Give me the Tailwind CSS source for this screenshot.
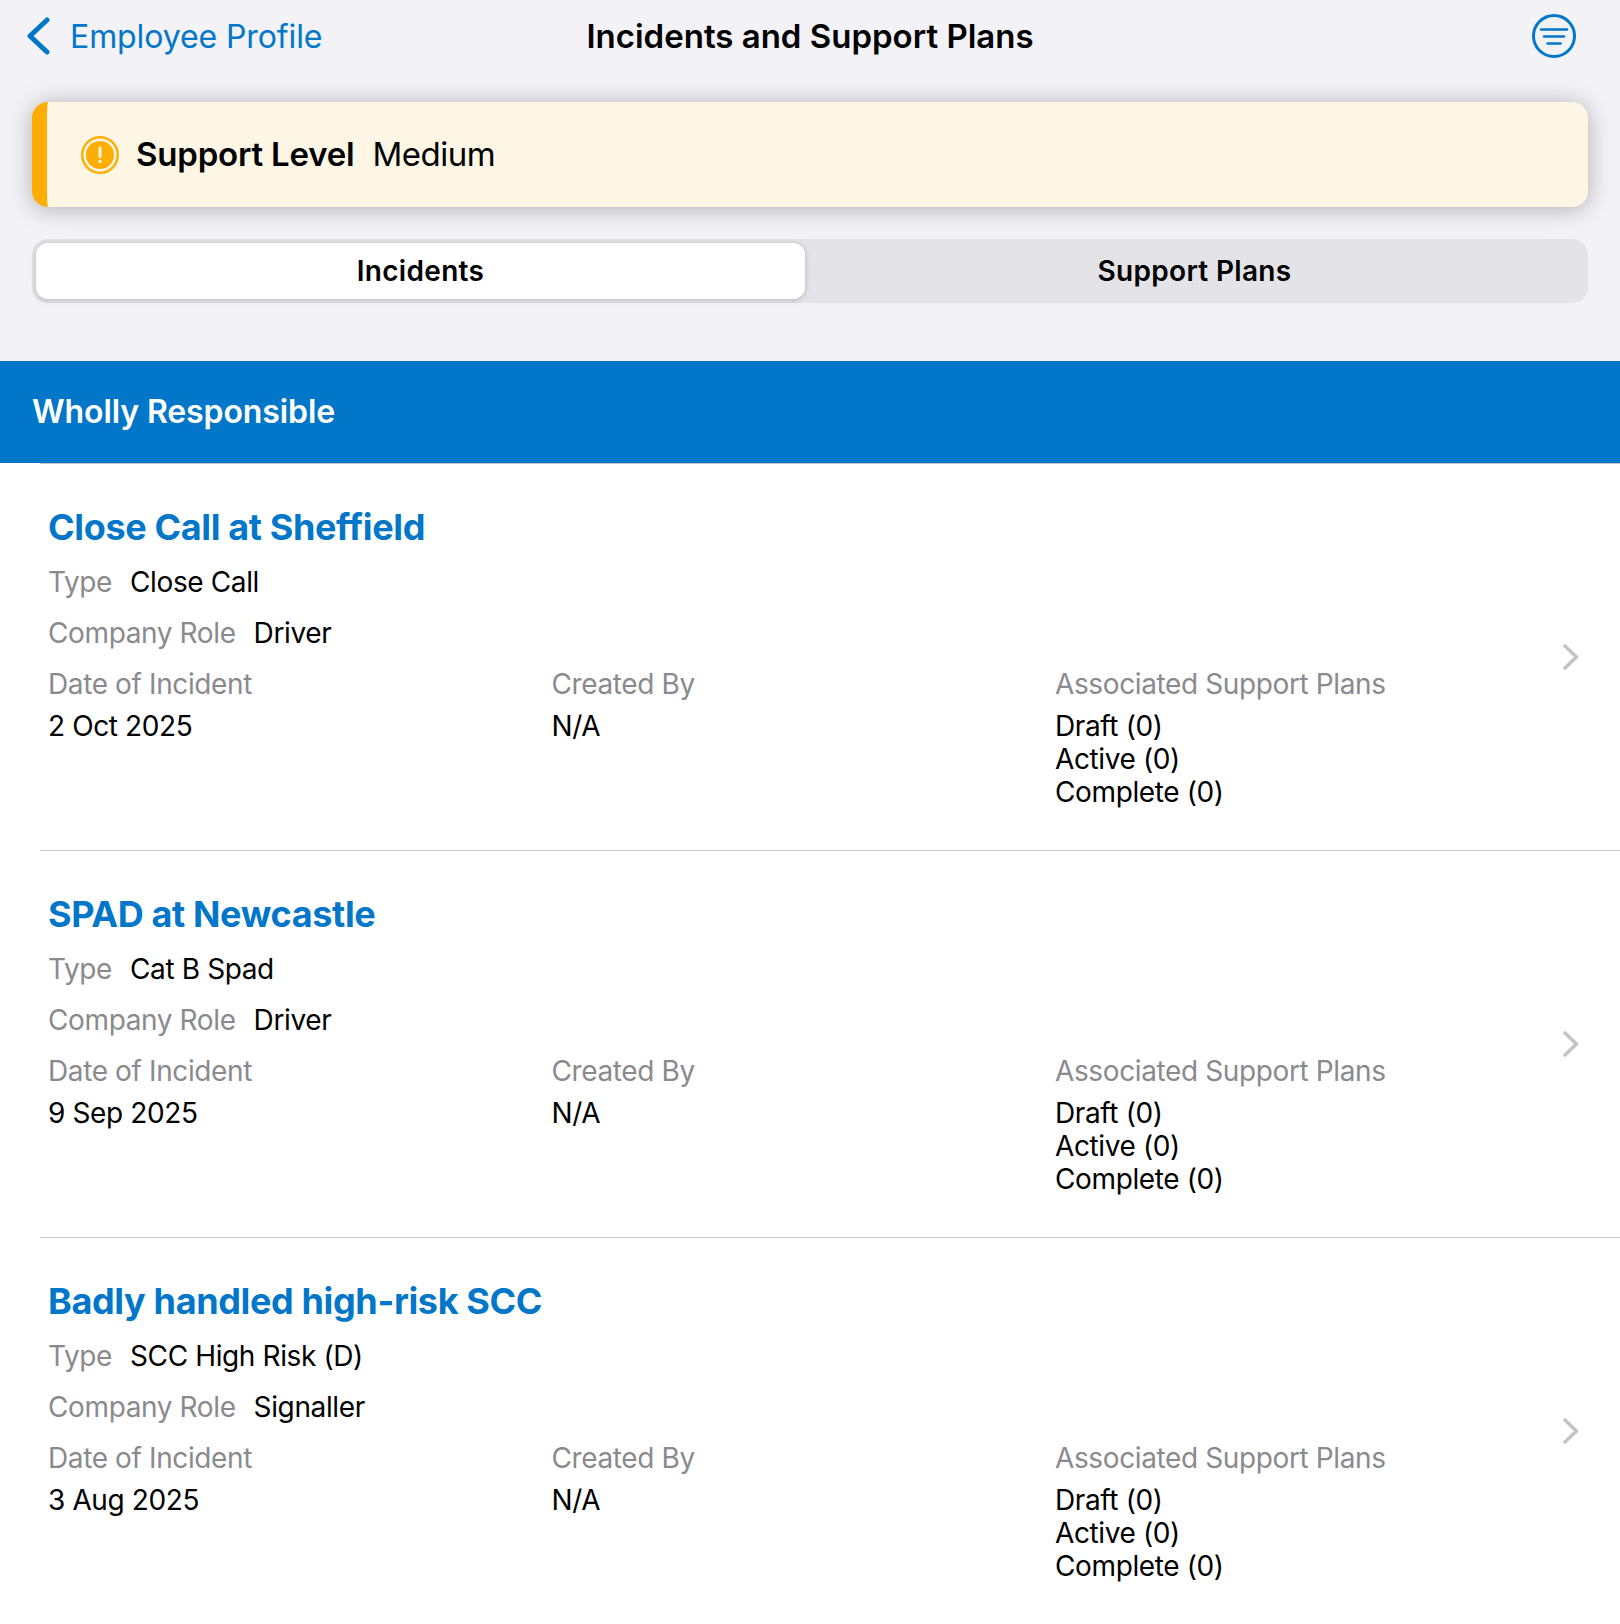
<!DOCTYPE html>
<html>
<head>
<meta charset="utf-8">
<title>Incidents and Support Plans</title>
<script src="https://cdn.jsdelivr.net/npm/@tailwindcss/browser@4"></script>
</head>
<body>
<div class="w-[1620px] h-[1624px] overflow-hidden bg-white flex flex-col font-['Inter',sans-serif] text-black">
  <div class="bg-[#f2f2f7] h-[361px] flex flex-col shrink-0">
    <!-- nav bar -->
    <div class="relative h-[72px] flex items-center justify-between pl-[26px] pr-[44px] shrink-0">
      <div class="flex items-center gap-[20px] text-[#0277c9] text-[32px] tracking-[-0.1px]">
        <svg width="24" height="38" viewBox="0 0 24 38" fill="none"><path d="M21 3 L4 19 L21 35" stroke="#0277c9" stroke-width="5" stroke-linecap="round" stroke-linejoin="round"/></svg>
        <span class="mt-[2px]">Employee Profile</span>
      </div>
      <div class="absolute inset-x-0 mt-[2px] text-center text-[33px] font-semibold pointer-events-none">Incidents and Support Plans</div>
      <svg width="44" height="44" viewBox="0 0 44 44" fill="none" stroke="#0277c9" stroke-linecap="round">
        <circle cx="22" cy="22" r="20.5" stroke-width="3"/>
        <path d="M9 15.5 H35" stroke-width="2.5"/>
        <path d="M12 22.5 H32" stroke-width="2.5"/>
        <path d="M15.5 29.5 H28.5" stroke-width="2.5"/>
      </svg>
    </div>
    <!-- support level -->
    <div class="mt-[30px] mx-[32px] h-[105px] rounded-[16px] overflow-hidden bg-[#fef6e5] border-l-[15px] border-[#ffad00] flex items-center pl-[34px] gap-[17px] shadow-[0_2px_24px_rgba(0,0,0,0.28)] shrink-0">
      <svg width="38" height="38" viewBox="0 0 38 38" fill="none">
        <circle cx="19" cy="19" r="17.8" stroke="#ffad00" stroke-width="2.4"/>
        <circle cx="19" cy="19" r="14" fill="#ffad00"/>
        <rect x="17.5" y="10.5" width="3" height="11.5" rx="1.5" fill="#fef6e5"/>
        <circle cx="19" cy="25.5" r="1.7" fill="#fef6e5"/>
      </svg>
      <span class="text-[33px] font-semibold tracking-[-0.2px]">Support Level</span>
      <span class="text-[33px] tracking-[-0.5px] ml-[1px]">Medium</span>
    </div>
    <!-- tabs -->
    <div class="mt-[32px] mx-[32px] h-[64px] rounded-[16px] bg-[#e3e3e8] p-[4px] grid grid-cols-[769px_1fr] text-[28px] font-semibold tracking-[0.3px] shrink-0">
      <div class="bg-white rounded-[12px] shadow-[0_1px_6px_rgba(0,0,0,0.2)] flex items-center justify-center">Incidents</div>
      <div class="flex items-center justify-center">Support Plans</div>
    </div>
  </div>
  <div class="bg-[#0277c9] h-[102px] pl-[32px] flex items-center text-white text-[32px] font-semibold tracking-[-0.1px] shrink-0">Wholly Responsible</div>

  <!-- incidents -->
  <div class="ml-[40px] border-t border-[#c6c6c8] h-[387px] relative pl-[8px] pt-[41px] shrink-0">
    <div class="text-[#0277c9] text-[36px] font-bold leading-[44px] tracking-[-0.36px]">Close Call at Sheffield</div>
    <div class="mt-[16px] text-[28px] leading-[34px] tracking-[-0.38px] flex gap-[18px]"><span class="text-[#8a8a8e]">Type</span><span>Close Call</span></div>
    <div class="mt-[17px] text-[28px] leading-[34px] tracking-[-0.38px] flex gap-[18px]"><span class="text-[#8a8a8e]">Company Role</span><span>Driver</span></div>
    <div class="mt-[18px] grid grid-cols-[503.5px_503.5px_1fr] text-[28px] leading-[33px] tracking-[-0.38px]">
      <div><div class="text-[#8a8a8e] mb-[9px]">Date of Incident</div><div>2 Oct 2025</div></div>
      <div><div class="text-[#8a8a8e] mb-[9px]">Created By</div><div>N/A</div></div>
      <div><div class="text-[#8a8a8e] mb-[9px]">Associated Support Plans</div><div>Draft (0)</div><div>Active (0)</div><div>Complete (0)</div></div>
    </div>
    <svg class="absolute left-[1523px] top-[180px]" width="16" height="26" viewBox="0 0 16 26" fill="none"><path d="M2 2 L13.5 13 L2 24" stroke="#c4c4c7" stroke-width="3.6" stroke-linecap="round" stroke-linejoin="round"/></svg>
  </div>

  <div class="ml-[40px] border-t border-[#c6c6c8] h-[387px] relative pl-[8px] pt-[41px] shrink-0">
    <div class="text-[#0277c9] text-[36px] font-bold leading-[44px] tracking-[-0.36px]">SPAD at Newcastle</div>
    <div class="mt-[16px] text-[28px] leading-[34px] tracking-[-0.38px] flex gap-[18px]"><span class="text-[#8a8a8e]">Type</span><span>Cat B Spad</span></div>
    <div class="mt-[17px] text-[28px] leading-[34px] tracking-[-0.38px] flex gap-[18px]"><span class="text-[#8a8a8e]">Company Role</span><span>Driver</span></div>
    <div class="mt-[18px] grid grid-cols-[503.5px_503.5px_1fr] text-[28px] leading-[33px] tracking-[-0.38px]">
      <div><div class="text-[#8a8a8e] mb-[9px]">Date of Incident</div><div>9 Sep 2025</div></div>
      <div><div class="text-[#8a8a8e] mb-[9px]">Created By</div><div>N/A</div></div>
      <div><div class="text-[#8a8a8e] mb-[9px]">Associated Support Plans</div><div>Draft (0)</div><div>Active (0)</div><div>Complete (0)</div></div>
    </div>
    <svg class="absolute left-[1523px] top-[180px]" width="16" height="26" viewBox="0 0 16 26" fill="none"><path d="M2 2 L13.5 13 L2 24" stroke="#c4c4c7" stroke-width="3.6" stroke-linecap="round" stroke-linejoin="round"/></svg>
  </div>

  <div class="ml-[40px] border-t border-[#c6c6c8] h-[387px] relative pl-[8px] pt-[41px] shrink-0">
    <div class="text-[#0277c9] text-[36px] font-bold leading-[44px] tracking-[-0.36px]">Badly handled high-risk SCC</div>
    <div class="mt-[16px] text-[28px] leading-[34px] tracking-[-0.38px] flex gap-[18px]"><span class="text-[#8a8a8e]">Type</span><span>SCC High Risk (D)</span></div>
    <div class="mt-[17px] text-[28px] leading-[34px] tracking-[-0.38px] flex gap-[18px]"><span class="text-[#8a8a8e]">Company Role</span><span>Signaller</span></div>
    <div class="mt-[18px] grid grid-cols-[503.5px_503.5px_1fr] text-[28px] leading-[33px] tracking-[-0.38px]">
      <div><div class="text-[#8a8a8e] mb-[9px]">Date of Incident</div><div>3 Aug 2025</div></div>
      <div><div class="text-[#8a8a8e] mb-[9px]">Created By</div><div>N/A</div></div>
      <div><div class="text-[#8a8a8e] mb-[9px]">Associated Support Plans</div><div>Draft (0)</div><div>Active (0)</div><div>Complete (0)</div></div>
    </div>
    <svg class="absolute left-[1523px] top-[180px]" width="16" height="26" viewBox="0 0 16 26" fill="none"><path d="M2 2 L13.5 13 L2 24" stroke="#c4c4c7" stroke-width="3.6" stroke-linecap="round" stroke-linejoin="round"/></svg>
  </div>
</div>
</body>
</html>
